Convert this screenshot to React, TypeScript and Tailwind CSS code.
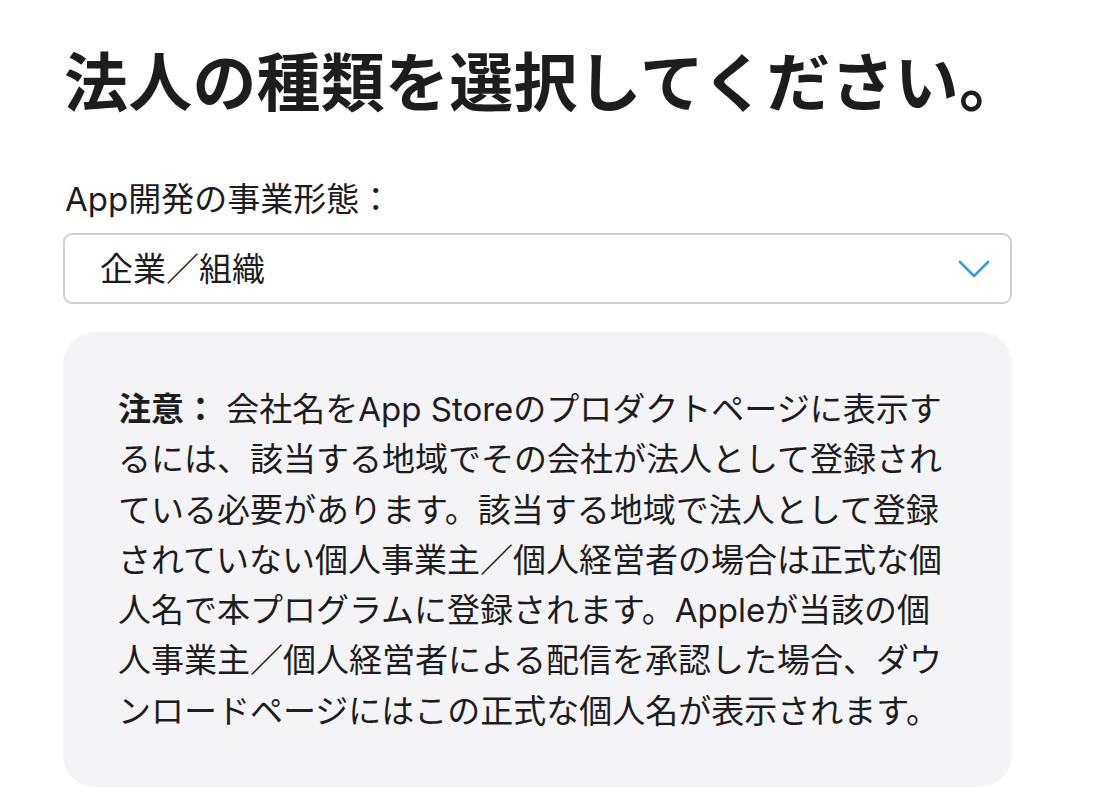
// Entity type selection form (JP)

const FONT = "font-['Inter','Noto_Sans_CJK_JP',sans-serif]";

function ChevronDown() {
  return (
    <svg width="32" height="20" viewBox="0 0 32 20" fill="none" className="shrink-0">
      <path d="M2 3 L16 17 L30 3" stroke="#3b9ad9" strokeWidth="2.6" strokeLinecap="round" strokeLinejoin="round" />
    </svg>
  );
}

export default function App() {
  return (
    <div className={`min-h-[810px] bg-white text-[#1d1d1f] ${FONT}`}>
      <div className="w-[949px] ml-[63px] pt-[43px]">
        {/* Heading */}
        <h1 className="text-[64px] leading-[80px] font-bold tracking-[0.2px] pl-[1px] whitespace-nowrap">
          法人の種類を選択してください。
        </h1>

        {/* Business form select */}
        <label className="block mt-[55px] pl-[2px] text-[33px] leading-[42px]">App開発の事業形態：</label>
        <div className="mt-[13px] h-[71px] rounded-[9px] border-2 border-[#cfcfcf] flex items-center justify-between pl-[35px] pr-[20px]">
          <span className="text-[33px] leading-[42px]">企業／組織</span>
          <ChevronDown />
        </div>

        {/* Notice */}
        <div className="mt-[28px] bg-[#f4f4f6] rounded-[32px] pl-[55px] pr-[52px] pt-[52px] pb-[51px]">
          <p className="text-[33px] leading-[50.3px]">
            <span className="font-bold">注意：</span> 会社名をApp Storeのプロダクトページに表示するには、該当する地域でその会社が法人として登録されている必要があります。該当する地域で法人として登録されていない個人事業主／個人経営者の場合は正式な個人名で本プログラムに登録されます。Appleが当該の個人事業主／個人経営者による配信を承認した場合、ダウンロードページにはこの正式な個人名が表示されます。
          </p>
        </div>
      </div>
    </div>
  );
}
